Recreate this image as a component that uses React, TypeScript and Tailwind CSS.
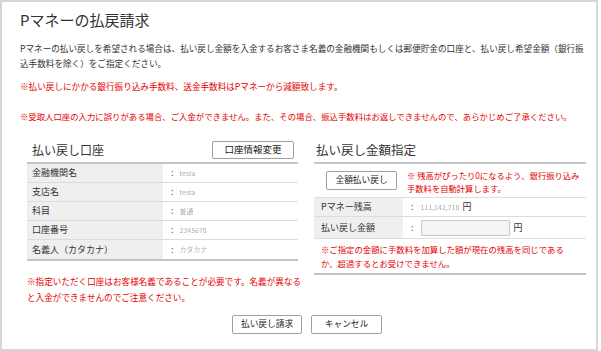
import React from 'react';

const accountRows = [
  { label: '金融機関名', value: 'testa' },
  { label: '支店名', value: 'testa' },
  { label: '科目', value: '普通' },
  { label: '口座番号', value: '2345678' },
  { label: '名義人（カタカナ）', value: 'カタカナ' },
];

const Btn: React.FC<{ children: React.ReactNode; className?: string }> = ({ children, className = '' }) => (
  <button
    className={`flex items-center justify-center bg-white border border-[#a0a0a0] rounded-[2px] text-[#222] leading-none ${className}`}
  >
    {children}
  </button>
);

const App: React.FC = () => {
  return (
    <div className="w-[601px] h-[351px] bg-white font-['Noto_Sans_CJK_JP',sans-serif] text-[#333]">
      <div className="w-[598px] h-[351px] border-2 border-[#d6d6d6] pl-[18px] pt-[8px]">
        <h1 className="text-[15px] leading-[20px] font-normal text-[#333]">Pマネーの払戻請求</h1>

        <div className="mt-[11px] text-[8.6px] leading-[15px] whitespace-nowrap">
          <p>Pマネーの払い戻しを希望される場合は、払い戻し金額を入金するお客さま名義の金融機関もしくは郵便貯金の口座と、払い戻し希望金額（銀行振</p>
          <p>込手数料を除く）をご指定ください。</p>
        </div>

        <p className="mt-[8px] text-[8.6px] leading-[15px] text-[#e60000] whitespace-nowrap">
          ※払い戻しにかかる銀行振り込み手数料、送金手数料はPマネーから減額致します。
        </p>
        <p className="mt-[15px] text-[8.4px] leading-[15px] text-[#e60000] whitespace-nowrap">
          ※受取人口座の入力に誤りがある場合、ご入金ができません。また、その場合、振込手数料はお返しできませんので、あらかじめご了承ください。
        </p>

        <div className="flex mt-[16px]">
          {/* left: account */}
          <div className="ml-[7px] w-[271px]">
            <div className="flex items-center justify-between h-[20px]">
              <h2 className="pl-[5px] text-[12px] font-normal text-[#333]">払い戻し口座</h2>
              <Btn className="w-[82px] h-[18px] mr-[4px] text-[9.5px]">口座情報変更</Btn>
            </div>
            <div className="mt-[2px] border-t-2 border-b-2 border-[#c4c4c4]">
              {accountRows.map((r, i) => (
                <div
                  key={r.label}
                  className={`flex h-[19px] text-[9px] ${i < accountRows.length - 1 ? 'border-b border-[#dcdcdc]' : ''}`}
                >
                  <div className="w-[136px] bg-[#efefef] pl-[5px] flex items-center">{r.label}</div>
                  <div className="flex-1 pl-[8px] flex items-center gap-[6px]">
                    <span className="text-[#555]">:</span>
                    <span className="text-[#b0b0b0] text-[7px] blur-[0.4px]">{r.value}</span>
                  </div>
                </div>
              ))}
            </div>
            <div className="mt-[12px] text-[8.6px] leading-[16px] text-[#e60000] whitespace-nowrap">
              <p>※指定いただく口座はお客様名義であることが必要です。名義が異なる</p>
              <p>と入金ができませんのでご注意ください。</p>
            </div>
          </div>

          {/* right: amount */}
          <div className="ml-[16px] w-[272px]">
            <h2 className="h-[20px] flex items-center pl-[2px] text-[12.5px] font-normal text-[#333]">払い戻し金額指定</h2>
            <div className="mt-[2px] border-t-2 border-b-2 border-[#c4c4c4]">
              <div className="flex h-[34px] items-start pt-[7px] border-b border-[#dcdcdc]">
                <Btn className="ml-[12px] w-[71px] h-[19px] text-[8.7px]">全額払い戻し</Btn>
                <div className="ml-[10px] mt-[-2px] text-[8.3px] leading-[13px] text-[#e60000] whitespace-nowrap">
                  <p>※ 残高がぴったり0になるよう、銀行振り込み</p>
                  <p>手数料を自動計算します。</p>
                </div>
              </div>
              <div className="flex h-[19px] text-[9px] border-b border-[#dcdcdc]">
                <div className="w-[89px] bg-[#efefef] pl-[7px] flex items-center">Pマネー残高</div>
                <div className="flex-1 pl-[8px] flex items-center">
                  <span className="text-[#555]">:</span>
                  <span className="ml-[7px] text-[#b0b0b0] text-[7px] blur-[0.4px]">111,142,718</span>
                  <span className="ml-[3px]">円</span>
                </div>
              </div>
              <div className="flex h-[22px] text-[9px] border-b border-[#dcdcdc]">
                <div className="w-[89px] bg-[#efefef] pl-[7px] flex items-center">払い戻し金額</div>
                <div className="flex-1 pl-[8px] flex items-center">
                  <span className="text-[#555]">:</span>
                  <div className="ml-[7px] w-[89px] h-[16px] border border-[#c8c8c8] bg-[#f4f4f4] rounded-[1px]" />
                  <span className="ml-[4px]">円</span>
                </div>
              </div>
              <div className="pl-[7px] pt-[3px] pb-[3px] text-[8.4px] leading-[14px] text-[#e60000] whitespace-nowrap">
                <p>※ご指定の金額に手数料を加算した額が現在の残高を同じである</p>
                <p>か、超過するとお受けできません。</p>
              </div>
            </div>
          </div>
        </div>

        <div className="flex gap-[9px] pl-[212px] mt-[10px]">
          <Btn className="w-[70px] h-[19px] text-[8.7px]">払い戻し請求</Btn>
          <Btn className="w-[71px] h-[19px] text-[8.7px]">キャンセル</Btn>
        </div>
      </div>
    </div>
  );
};

export default App;
